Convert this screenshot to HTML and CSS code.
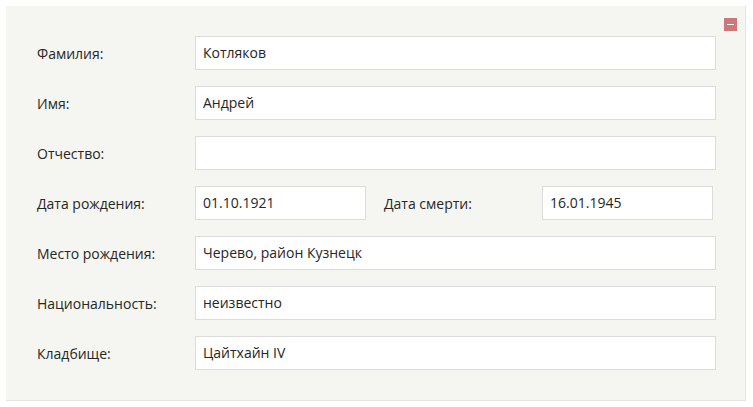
FILE: index.html
```html
<!DOCTYPE html>
<html lang="ru">
<head>
    <meta charset="UTF-8">
    <title>Карточка</title>
    <link rel="stylesheet" href="styles.css">
</head>
<body>
    <div class="panel">
        <button class="collapse" title="Свернуть"></button>
        <div class="row">
            <label class="label">Фамилия:</label>
            <div class="field">Котляков</div>
        </div>
        <div class="row">
            <label class="label">Имя:</label>
            <div class="field">Андрей</div>
        </div>
        <div class="row">
            <label class="label">Отчество:</label>
            <div class="field"></div>
        </div>
        <div class="row">
            <label class="label">Дата рождения:</label>
            <div class="field short">01.10.1921</div>
            <label class="label second">Дата смерти:</label>
            <div class="field short">16.01.1945</div>
        </div>
        <div class="row">
            <label class="label">Место рождения:</label>
            <div class="field">Черево, район Кузнецк</div>
        </div>
        <div class="row">
            <label class="label">Национальность:</label>
            <div class="field">неизвестно</div>
        </div>
        <div class="row">
            <label class="label">Кладбище:</label>
            <div class="field">Цайтхайн IV</div>
        </div>
    </div>
</body>
</html>
```

FILE: styles.css
```css
body {
    margin: 0;
    padding: 6px 7px 6px 6px;
    background-color: #fff;
    font-family: 'Open Sans', sans-serif;
    color: #262626;
}

.panel {
    position: relative;
    box-sizing: border-box;
    width: 740px;
    height: 395px;
    padding: 30px 29px 0 31px;
    background-color: #f5f6f2;
    border-right: 1px solid #e4e4e0;
    border-bottom: 1px solid #e4e4e0;
    display: flex;
    flex-direction: column;
    gap: 16px;
}

.collapse {
    position: absolute;
    top: 12px;
    right: 8px;
    width: 13px;
    height: 13px;
    padding: 0;
    border: none;
    background-color: #cc7878;
    cursor: pointer;
}

.collapse::after {
    content: '';
    position: absolute;
    left: 3px;
    top: 6px;
    width: 7px;
    height: 1px;
    background-color: #fff;
}

.row {
    display: flex;
    align-items: center;
    height: 34px;
}

.label {
    flex: none;
    width: 158px;
    font-size: 14px;
}

.label.second {
    margin-left: 18px;
}

.field {
    flex: none;
    box-sizing: border-box;
    width: 521px;
    height: 34px;
    padding: 0 7px;
    background-color: #fff;
    border: 1px solid #dcdcdc;
    font-size: 14px;
    line-height: 32px;
}

.field.short {
    width: 171px;
}
```
